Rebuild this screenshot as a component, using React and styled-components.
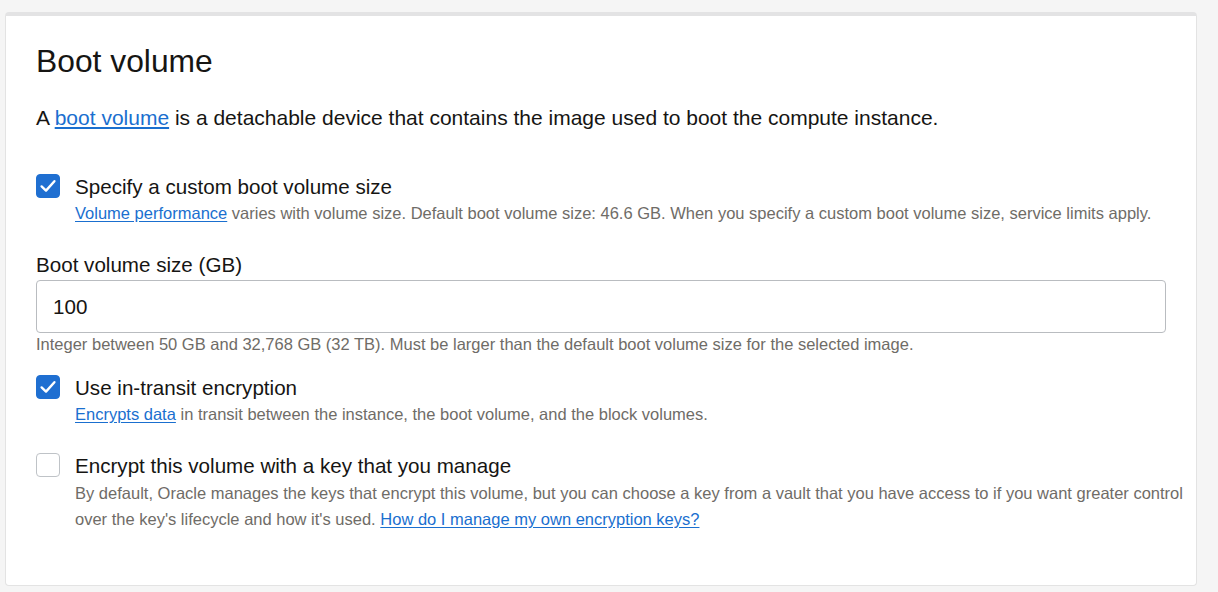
import React from "react";
import styled, { createGlobalStyle } from "styled-components";

const Global = createGlobalStyle`
  html, body { margin: 0; padding: 0; background: #f5f5f5; }
  body { font-family: "Liberation Sans", Arial, sans-serif; color: #161513; }
  * { box-sizing: border-box; }
`;

const Page = styled.div`
  padding: 12px 21px 7px 5px;
`;

const Card = styled.section`
  background: #fff;
  border: 1px solid #e3e3e3;
  border-top: 4px solid #e3e3e4;
  border-radius: 4px;
  padding: 25px 12px 53px 30px;
  display: flex;
  flex-direction: column;
`;

const Title = styled.h2`
  margin: 0;
  font-size: 31.8px;
  line-height: 40px;
  font-weight: 400;
  color: #161513;
`;

const Intro = styled.p`
  margin: 23px 0 0;
  font-size: 21px;
  line-height: 28px;
  color: #161513;
`;

const Link = styled.a`
  color: #1a6fcf;
  text-decoration: underline;
  text-underline-offset: 2px;
  cursor: pointer;
`;

const CheckRow = styled.label`
  display: flex;
  align-items: flex-start;
  gap: 15px;
  margin-top: ${(p) => p.$top}px;
  cursor: pointer;
`;

const Box = styled.span`
  flex: none;
  width: 24px;
  height: 24px;
  border-radius: 4px;
  display: flex;
  align-items: center;
  justify-content: center;
  background: ${(p) => (p.$checked ? "#1f6fd1" : "#fff")};
  border: 1px solid ${(p) => (p.$checked ? "#1f6fd1" : "#bfc3c7")};
`;

const CheckText = styled.span`
  display: flex;
  flex-direction: column;
`;

const CheckLabel = styled.span`
  font-size: 20.6px;
  line-height: 24px;
  margin-top: 1px;
  color: #161513;
`;

const Hint = styled.span`
  font-size: 16.5px;
  line-height: ${(p) => p.$lh || 22}px;
  margin-top: ${(p) => p.$gap ?? 4}px;
  color: #6f6c67;
`;

const FieldLabel = styled.div`
  margin-top: 29px;
  font-size: 20.6px;
  line-height: 24px;
  color: #161513;
`;

const Input = styled.input`
  margin-top: 3px;
  width: 1130px;
  height: 53px;
  border: 1px solid #b9bcc0;
  border-radius: 4px;
  padding: 0 16px;
  font-family: "Liberation Sans", Arial, sans-serif;
  font-size: 20.6px;
  color: #161513;
  outline: none;
  background: #fff;
`;

const FieldHint = styled.div`
  margin-top: 0;
  font-size: 16.5px;
  line-height: 22px;
  color: #6f6c67;
`;

function Check({ checked }) {
  return (
    <Box $checked={checked}>
      {checked && (
        <svg width="20" height="20" viewBox="0 0 20 20" fill="none">
          <path d="M3.6 10.4 L8 14.6 L16.4 5.2" stroke="#fff" strokeWidth="2.4" strokeLinecap="round" strokeLinejoin="round" />
        </svg>
      )}
    </Box>
  );
}

export default function App() {
  return (
    <>
      <Global />
      <Page>
        <Card>
          <Title>Boot volume</Title>
          <Intro>
            A <Link>boot volume</Link> is a detachable device that contains the image used to boot the compute instance.
          </Intro>

          <CheckRow $top={42}>
            <Check checked />
            <CheckText>
              <CheckLabel>Specify a custom boot volume size</CheckLabel>
              <Hint $gap={3}>
                <Link>Volume performance</Link> varies with volume size. Default boot volume size: 46.6 GB. When you specify a custom boot volume size, service limits apply.
              </Hint>
            </CheckText>
          </CheckRow>

          <FieldLabel>Boot volume size (GB)</FieldLabel>
          <Input defaultValue="100" />
          <FieldHint>Integer between 50 GB and 32,768 GB (32 TB). Must be larger than the default boot volume size for the selected image.</FieldHint>

          <CheckRow $top={20}>
            <Check checked />
            <CheckText>
              <CheckLabel>Use in-transit encryption</CheckLabel>
              <Hint $gap={3}>
                <Link>Encrypts data</Link> in transit between the instance, the boot volume, and the block volumes.
              </Hint>
            </CheckText>
          </CheckRow>

          <CheckRow $top={28}>
            <Check />
            <CheckText>
              <CheckLabel>Encrypt this volume with a key that you manage</CheckLabel>
              <Hint $lh={26} $gap={2}>
                By default, Oracle manages the keys that encrypt this volume, but you can choose a key from a vault that you have access to if you want greater control over the key's lifecycle and how it's used. <Link>How do I manage my own encryption keys?</Link>
              </Hint>
            </CheckText>
          </CheckRow>
        </Card>
      </Page>
    </>
  );
}
